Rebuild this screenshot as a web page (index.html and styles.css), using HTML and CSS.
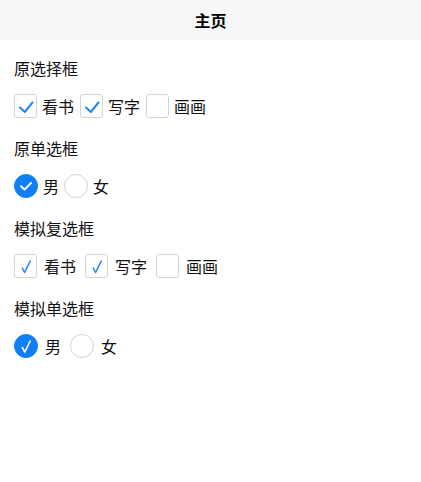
FILE: index.html
```html
<!DOCTYPE html>
<html lang="zh">
    <head>
        <meta charset="UTF-8">
        <title>主页</title>
        <link rel="stylesheet" href="styles.css">
    </head>
    <body>

        <div class="header">主页</div>

        <div class="page">
            <!-- 原选择框 -->
            <div class="group">
                <div class="title">原选择框</div>
                <div class="row check">
                    <label class="item">
                        <span class="box">
                            <svg width="24" height="24" viewBox="0 0 24 24"><path d="M6 13.5 L10.8 18 L18.5 8.5" class="tick"/></svg>
                        </span>
                        <span class="txt">看书</span>
                    </label>
                    <label class="item">
                        <span class="box">
                            <svg width="24" height="24" viewBox="0 0 24 24"><path d="M6 13.5 L10.8 18 L18.5 8.5" class="tick"/></svg>
                        </span>
                        <span class="txt">写字</span>
                    </label>
                    <label class="item">
                        <span class="box"></span>
                        <span class="txt">画画</span>
                    </label>
                </div>
            </div>

            <!-- 原单选框 -->
            <div class="group">
                <div class="title">原单选框</div>
                <div class="row">
                    <label class="item">
                        <span class="round on">
                            <svg width="24" height="24" viewBox="0 0 24 24"><path d="M7 12.3 L10.5 15.6 L17 9" class="tick white"/></svg>
                        </span>
                        <span class="txt">男</span>
                    </label>
                    <label class="item">
                        <span class="round"></span>
                        <span class="txt">女</span>
                    </label>
                </div>
            </div>

            <!-- 模拟复选框 -->
            <div class="group">
                <div class="title">模拟复选框</div>
                <div class="row wide">
                    <label class="item">
                        <span class="box">
                            <svg width="24" height="24" viewBox="0 0 24 24"><path d="M8 13.5 L10.6 18.5 L16.5 6.5" class="thin"/></svg>
                        </span>
                        <span class="txt">看书</span>
                    </label>
                    <label class="item">
                        <span class="box">
                            <svg width="24" height="24" viewBox="0 0 24 24"><path d="M8 13.5 L10.6 18.5 L16.5 6.5" class="thin"/></svg>
                        </span>
                        <span class="txt">写字</span>
                    </label>
                    <label class="item">
                        <span class="box"></span>
                        <span class="txt">画画</span>
                    </label>
                </div>
            </div>

            <!-- 模拟单选框 -->
            <div class="group">
                <div class="title">模拟单选框</div>
                <div class="row wide">
                    <label class="item">
                        <span class="round on">
                            <svg width="24" height="24" viewBox="0 0 24 24"><path d="M8 13 L10.8 18 L16.5 6.5" class="thin white"/></svg>
                        </span>
                        <span class="txt">男</span>
                    </label>
                    <label class="item">
                        <span class="round"></span>
                        <span class="txt">女</span>
                    </label>
                </div>
            </div>
        </div>

    </body>
</html>
```

FILE: styles.css
```css
body {
    margin: 0;
    font-family: "Noto Sans CJK SC", "Noto Sans", sans-serif;
    color: #111;
    background-color: #fff;
}

.header {
    height: 40px;
    line-height: 40px;
    text-align: center;
    font-size: 16px;
    font-weight: bold;
    color: #000;
    background-color: #f7f7f7;
}

.page {
    padding: 16px 14px 0;
    display: flex;
    flex-direction: column;
    gap: 18px;
}

.group {
    display: flex;
    flex-direction: column;
    gap: 14px;
}

.title {
    font-size: 16px;
    line-height: 24px;
}

.row {
    display: flex;
    align-items: center;
    gap: 5px;
    height: 24px;
}

.row.check {
    gap: 6px;
}

.row.wide {
    gap: 9px;
}

.item {
    display: flex;
    align-items: center;
    gap: 5px;
}

.row.wide .item {
    gap: 7px;
}

.txt {
    font-size: 16px;
    line-height: 24px;
}

.box {
    width: 21px;
    height: 22px;
    border: 1px solid #d4d4d4;
    border-radius: 3px;
    display: flex;
    align-items: center;
    justify-content: center;
    overflow: hidden;
}

.round {
    width: 22px;
    height: 22px;
    border: 1px solid #d4d4d4;
    border-radius: 50%;
    display: flex;
    align-items: center;
    justify-content: center;
    overflow: hidden;
}

.round.on {
    background-color: #0f7ff5;
    border-color: #0f7ff5;
}

.box svg, .round svg {
    flex: none;
}

.tick {
    fill: none;
    stroke: #1e88f5;
    stroke-width: 2;
    stroke-linecap: round;
    stroke-linejoin: round;
}

.thin {
    fill: none;
    stroke: #2a86f5;
    stroke-width: 1.6;
    stroke-linejoin: round;
}

.white {
    stroke: #fff;
}
```
